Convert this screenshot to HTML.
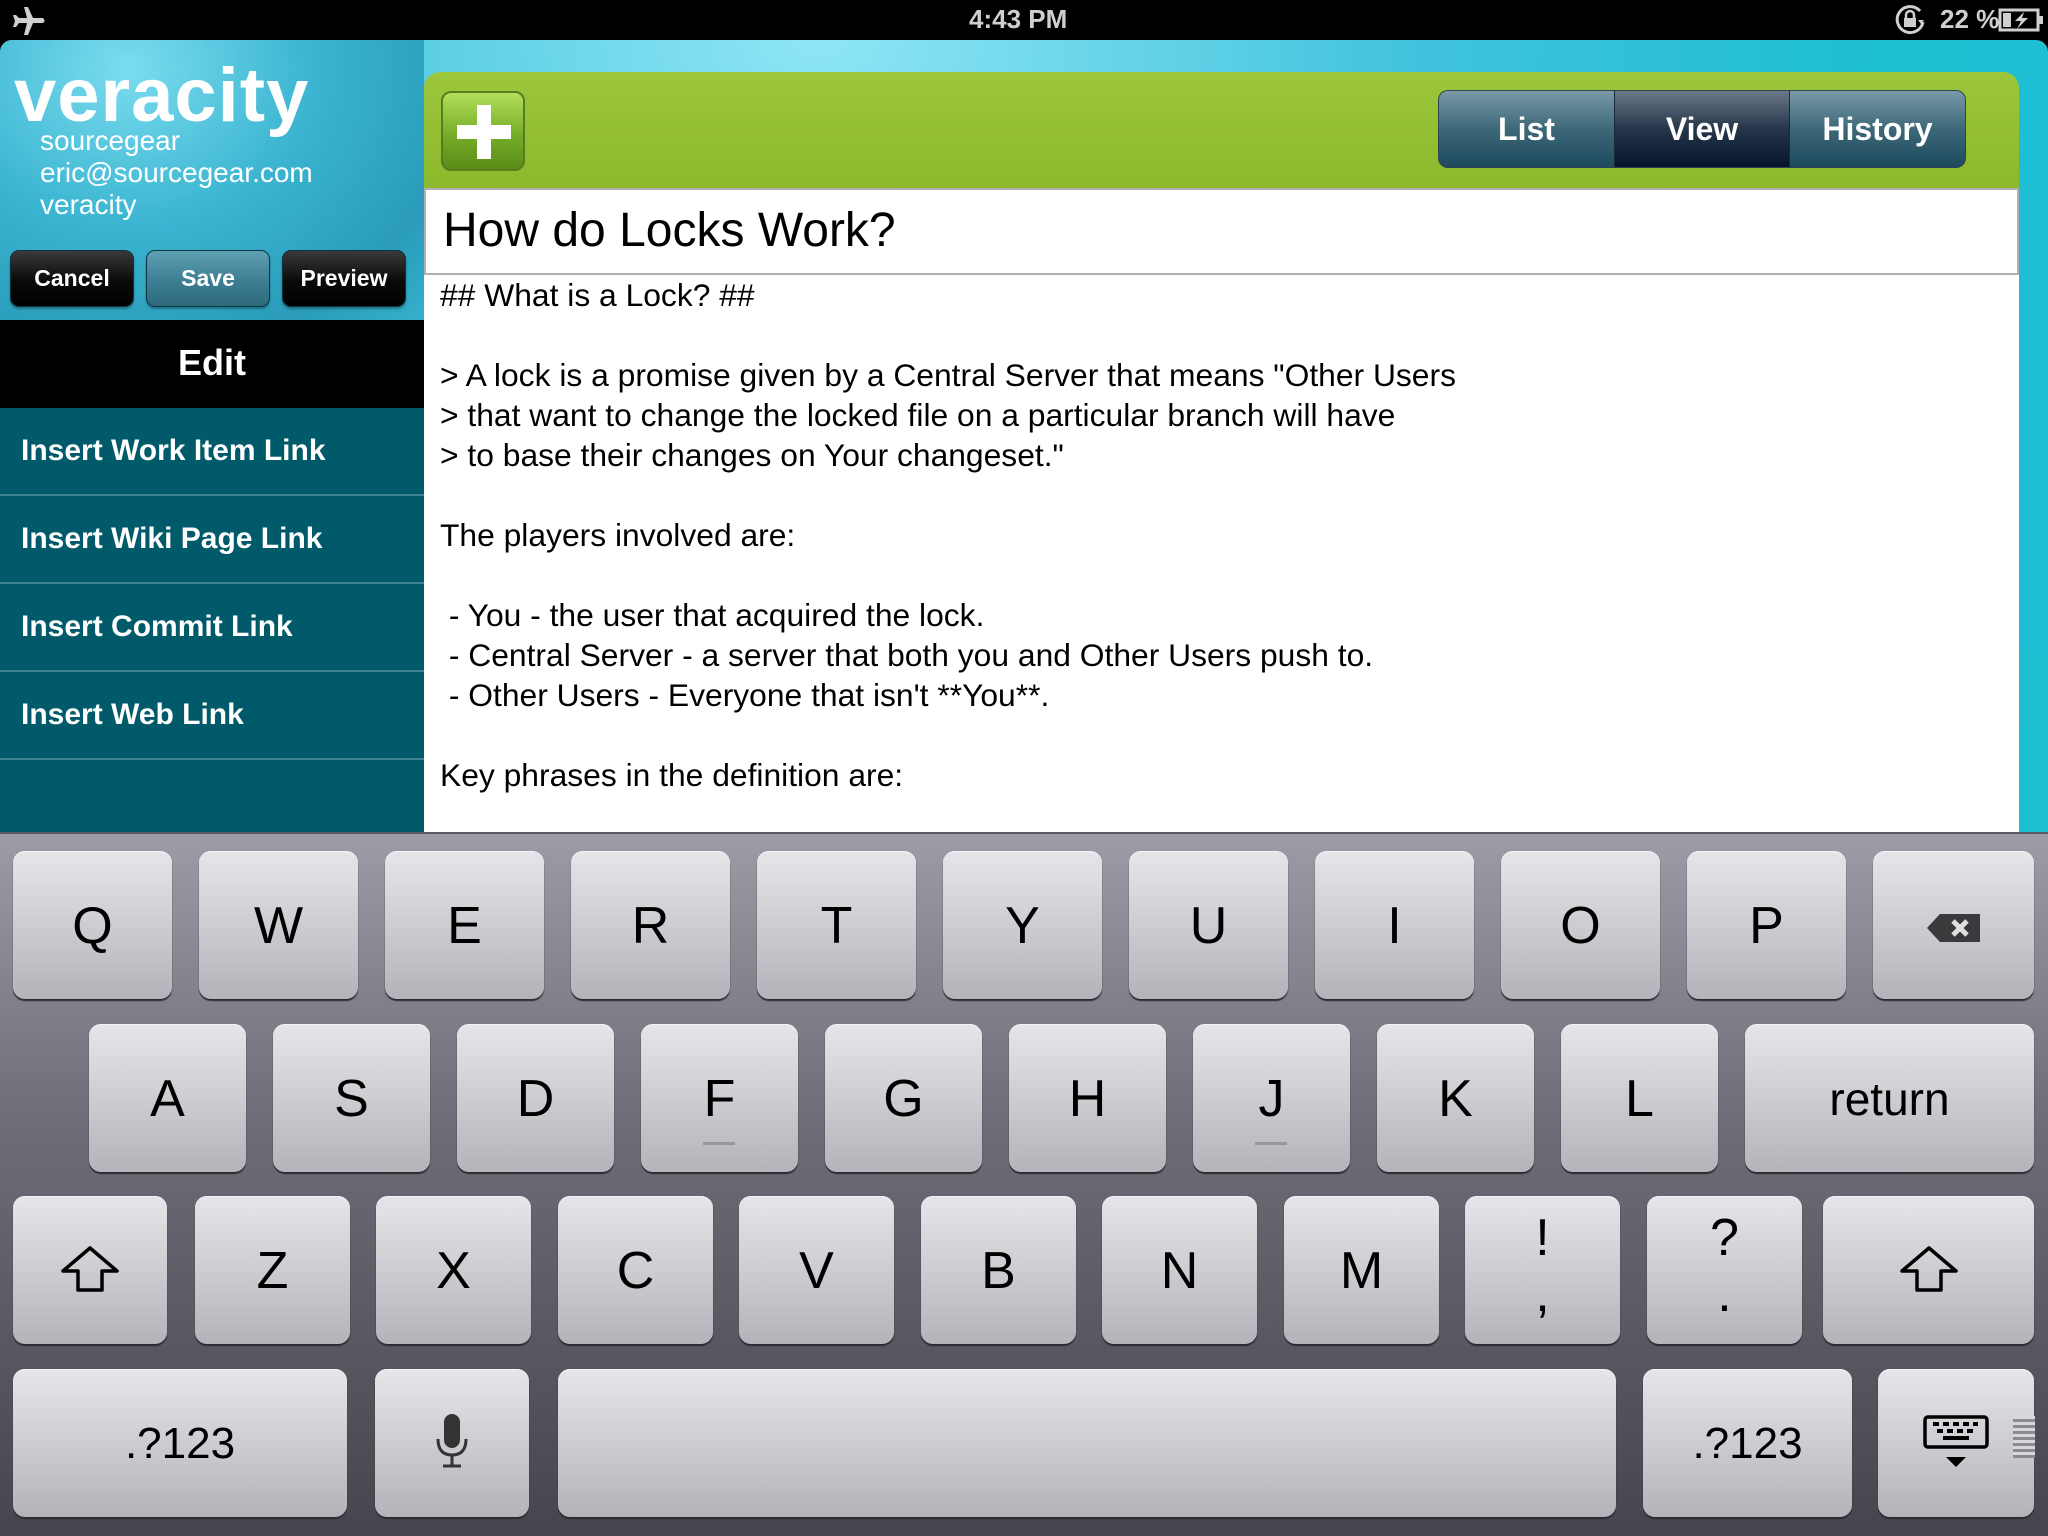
<!DOCTYPE html>
<html><head><meta charset="utf-8"><style>
*{margin:0;padding:0;box-sizing:border-box}
body{width:2048px;height:1536px;overflow:hidden;background:#000;font-family:"Liberation Sans",Arial,sans-serif;position:relative}
.a{position:absolute}
#status{left:0;top:0;width:2048px;height:40px;background:#000;color:#cfcfcf;font-weight:bold;font-size:26px}
#header{left:0;top:40px;width:2048px;height:800px;border-radius:12px 12px 0 0;background:radial-gradient(ellipse at 40% 0%,#8fe6f5 0%,#3fc2dc 35%,#1fbfd4 60%,#1dbfd3 100%)}
#lefthead{left:0;top:40px;width:424px;height:280px;background:radial-gradient(ellipse at 30% 10%,#7bdcf0 0%,#3ab4d0 45%,#2a9cba 80%,#35b0cc 100%);border-radius:12px 0 0 0}
.hbtn{top:250px;height:57px;width:124px;border-radius:9px;color:#fff;font-weight:bold;font-size:23px;text-align:center;line-height:55px;border:1px solid #0a3440;box-shadow:0 2px 2px rgba(0,0,0,.3)}
.black{background:linear-gradient(#3a3a3a,#0a0a0a 55%,#000)}
.sidebar{left:0;top:320px;width:424px;height:513px;background:#015a69}
.edit{left:0;top:320px;width:424px;height:88px;background:#000;color:#fff;font-weight:bold;font-size:36px;text-align:center;line-height:86px}
.item{left:0;width:424px;height:88px;border-bottom:2px solid #3f8590;color:#fff;font-weight:bold;font-size:30px;line-height:86px;padding-left:21px}
#green{left:424px;top:72px;width:1595px;height:118px;background:linear-gradient(#9cc63c,#8cb82c);border-radius:16px 16px 0 0}
#plus{left:441px;top:91px;width:84px;height:80px;border-radius:10px;background:linear-gradient(#b2e05a,#76ac28 55%,#5a8c18);border:2px solid #567d20}
.seg{top:90px;height:78px;width:176px;color:#fff;font-weight:bold;font-size:32px;text-align:center;line-height:76px;background:linear-gradient(#7a9aa8,#3d6878 50%,#1d4a5e);border-top:1px solid #2c4450;border-bottom:1px solid #2c4450}
#content{left:424px;top:188px;width:1595px;height:645px;background:#fff}
#title{left:424px;top:188px;width:1595px;height:87px;border:2px solid #b0b0b0;background:#fff;font-size:48px;line-height:82px;padding-left:17px;color:#000}
.tl{left:440px;font-size:31.8px;color:#000;white-space:pre}
#kb{left:0;top:832px;width:2048px;height:704px;background:linear-gradient(#9c9ca6,#6e6e78 40%,#45454e);border-top:2px solid #5a5a62}
.k{height:148px;border-radius:12px;background:linear-gradient(#e6e6ea,#b3b3b9);box-shadow:0 2px 1px #2a2a30,inset 0 1px 0 #f4f4f6;text-align:center;color:#000;font-size:52px;line-height:150px}
</style></head><body>
<div class="a" id="status">
<svg class="a" style="left:10px;top:6px" width="36" height="30" viewBox="0 0 36 30"><path d="M14 1 L18 1 L23 12 L33 12 Q36 15 33 17 L23 17 L18 29 L14 29 L17 17 L9 17 L6 21 L3 21 L5 15 L3 9 L6 9 L9 12 L17 12 Z" fill="#cfcfcf"/></svg>
<div class="a" style="left:969px;top:4px">4:43 PM</div>
<svg class="a" style="left:1893px;top:3px" width="34" height="34" viewBox="0 0 34 34"><path d="M27 8 A13 13 0 1 0 30 19" fill="none" stroke="#cfcfcf" stroke-width="3"/><path d="M25 17 L31 17 L28 21 Z" fill="#cfcfcf"/><rect x="11" y="15" width="12" height="9" fill="#cfcfcf"/><path d="M13 15 V12 A4 4 0 0 1 21 12 V15" fill="none" stroke="#cfcfcf" stroke-width="2.5"/></svg>
<div class="a" style="left:1940px;top:4px;font-size:26px">22 %</div>
<svg class="a" style="left:1998px;top:8px" width="46" height="24" viewBox="0 0 46 24"><rect x="2" y="2" width="38" height="20" fill="none" stroke="#cfcfcf" stroke-width="3"/><rect x="41" y="8" width="4" height="8" fill="#cfcfcf"/><rect x="5" y="5" width="8" height="14" fill="#cfcfcf"/><path d="M26 4 L17 13 L23 13 L19 21 L30 10 L24 10 Z" fill="#cfcfcf"/></svg>
</div>
<div class="a" id="header"></div>
<div class="a" id="lefthead"></div>
<div class="a" style="left:14px;top:52px;color:#fff;font-size:76px;font-weight:bold;letter-spacing:1px">veracity</div>
<div class="a" style="left:40px;top:125px;color:#fff;font-size:28px;line-height:32px">sourcegear<br>eric@sourcegear.com<br>veracity</div>
<div class="a hbtn black" style="left:10px">Cancel</div>
<div class="a hbtn" style="left:146px;background:linear-gradient(#5fa0b4,#3d7e92 55%,#2e6a7e)">Save</div>
<div class="a hbtn black" style="left:282px">Preview</div>
<div class="a sidebar"></div>
<div class="a edit">Edit</div>
<div class="a item" style="top:408px">Insert Work Item Link</div>
<div class="a item" style="top:496px">Insert Wiki Page Link</div>
<div class="a item" style="top:584px">Insert Commit Link</div>
<div class="a item" style="top:672px">Insert Web Link</div>
<div class="a" id="green"></div>
<div class="a" id="plus"><div class="a" style="left:34px;top:12px;width:14px;height:54px;background:#fff"></div><div class="a" style="left:14px;top:32px;width:54px;height:14px;background:#fff"></div></div>
<div class="a seg" style="left:1438px;border-radius:10px 0 0 10px;border-left:1px solid #2c4450">List</div>
<div class="a seg" style="left:1614px;background:linear-gradient(#6a7888,#26364a 50%,#06142a);border-left:1px solid #1a2a36;border-right:1px solid #1a2a36">View</div>
<div class="a seg" style="left:1790px;border-radius:0 10px 10px 0;border-right:1px solid #2c4450">History</div>
<div class="a" id="content"></div>
<div class="a" id="title">How do Locks Work?</div>
<div class="a tl" style="top:277px">## What is a Lock? ##</div>
<div class="a tl" style="top:357px">&gt; A lock is a promise given by a Central Server that means "Other Users</div>
<div class="a tl" style="top:397px">&gt; that want to change the locked file on a particular branch will have</div>
<div class="a tl" style="top:437px">&gt; to base their changes on Your changeset."</div>
<div class="a tl" style="top:517px">The players involved are:</div>
<div class="a tl" style="top:597px"> - You - the user that acquired the lock.</div>
<div class="a tl" style="top:637px"> - Central Server - a server that both you and Other Users push to.</div>
<div class="a tl" style="top:677px"> - Other Users - Everyone that isn't **You**.</div>
<div class="a tl" style="top:757px">Key phrases in the definition are:</div>
<div class="a" id="kb"></div>
<div class="a k" style="left:13px;top:851px;width:159px">Q</div>
<div class="a k" style="left:199px;top:851px;width:159px">W</div>
<div class="a k" style="left:385px;top:851px;width:159px">E</div>
<div class="a k" style="left:571px;top:851px;width:159px">R</div>
<div class="a k" style="left:757px;top:851px;width:159px">T</div>
<div class="a k" style="left:943px;top:851px;width:159px">Y</div>
<div class="a k" style="left:1129px;top:851px;width:159px">U</div>
<div class="a k" style="left:1315px;top:851px;width:159px">I</div>
<div class="a k" style="left:1501px;top:851px;width:159px">O</div>
<div class="a k" style="left:1687px;top:851px;width:159px">P</div>
<div class="a k" style="left:1873px;top:851px;width:161px"><svg style="margin-top:54px" width="56" height="30" viewBox="0 0 56 30"><path d="M14 1 H54 V29 H14 L1 15 Z" fill="#3a3a3c"/><path d="M27 8 L41 22 M41 8 L27 22" stroke="#e0e0e0" stroke-width="5"/></svg></div>
<div class="a k" style="left:89px;top:1024px;width:157px">A</div>
<div class="a k" style="left:273px;top:1024px;width:157px">S</div>
<div class="a k" style="left:457px;top:1024px;width:157px">D</div>
<div class="a k" style="left:641px;top:1024px;width:157px">F<div class="a" style="left:62px;top:118px;width:32px;height:3px;background:#999"></div></div>
<div class="a k" style="left:825px;top:1024px;width:157px">G</div>
<div class="a k" style="left:1009px;top:1024px;width:157px">H</div>
<div class="a k" style="left:1193px;top:1024px;width:157px">J<div class="a" style="left:62px;top:118px;width:32px;height:3px;background:#999"></div></div>
<div class="a k" style="left:1377px;top:1024px;width:157px">K</div>
<div class="a k" style="left:1561px;top:1024px;width:157px">L</div>
<div class="a k" style="left:1745px;top:1024px;width:289px;font-size:46px">return</div>
<div class="a k" style="left:13px;top:1196px;width:154px"><svg style="margin-top:50px" width="58" height="46" viewBox="0 0 58 46"><path d="M29 2 L56 25 L41 25 L41 44 L17 44 L17 25 L2 25 Z" fill="none" stroke="#000" stroke-width="3.5" stroke-linejoin="round"/></svg></div>
<div class="a k" style="left:195px;top:1196px;width:155px">Z</div>
<div class="a k" style="left:376px;top:1196px;width:155px">X</div>
<div class="a k" style="left:558px;top:1196px;width:155px">C</div>
<div class="a k" style="left:739px;top:1196px;width:155px">V</div>
<div class="a k" style="left:921px;top:1196px;width:155px">B</div>
<div class="a k" style="left:1102px;top:1196px;width:155px">N</div>
<div class="a k" style="left:1284px;top:1196px;width:155px">M</div>
<div class="a k" style="left:1465px;top:1196px;width:155px;line-height:56px;padding-top:14px">!<br>,</div>
<div class="a k" style="left:1647px;top:1196px;width:155px;line-height:56px;padding-top:14px">?<br>.</div>
<div class="a k" style="left:1823px;top:1196px;width:211px"><svg style="margin-top:50px" width="58" height="46" viewBox="0 0 58 46"><path d="M29 2 L56 25 L41 25 L41 44 L17 44 L17 25 L2 25 Z" fill="none" stroke="#000" stroke-width="3.5" stroke-linejoin="round"/></svg></div>
<div class="a k" style="left:13px;top:1369px;width:334px;font-size:44px">.?123</div>
<div class="a k" style="left:375px;top:1369px;width:154px"><svg style="margin-top:44px" width="34" height="56" viewBox="0 0 34 56"><rect x="9" y="1" width="16" height="34" rx="8" fill="#333"/><path d="M3 26 Q3 42 17 42 Q31 42 31 26" fill="none" stroke="#333" stroke-width="3"/><path d="M17 42 V52 M8 53 H26" stroke="#333" stroke-width="3"/></svg></div>
<div class="a k" style="left:558px;top:1369px;width:1058px"></div>
<div class="a k" style="left:1643px;top:1369px;width:209px;font-size:44px">.?123</div>
<div class="a k" style="left:1878px;top:1369px;width:156px"><svg style="margin-top:46px" width="66" height="56" viewBox="0 0 66 56"><rect x="2" y="2" width="62" height="30" rx="3" fill="none" stroke="#000" stroke-width="3.5"/><path d="M10 9h6M20 9h6M30 9h6M40 9h6M50 9h5M14 16h6M24 16h6M34 16h6M44 16h6M20 23h26" stroke="#000" stroke-width="4"/><path d="M23 42 L43 42 L33 52 Z" fill="#000"/></svg></div>
<div class="a" style="left:2013px;top:1416px;width:22px;height:42px;background:repeating-linear-gradient(#d8d8dc 0 3px,#8a8a90 3px 6px)"></div>
</body></html>
